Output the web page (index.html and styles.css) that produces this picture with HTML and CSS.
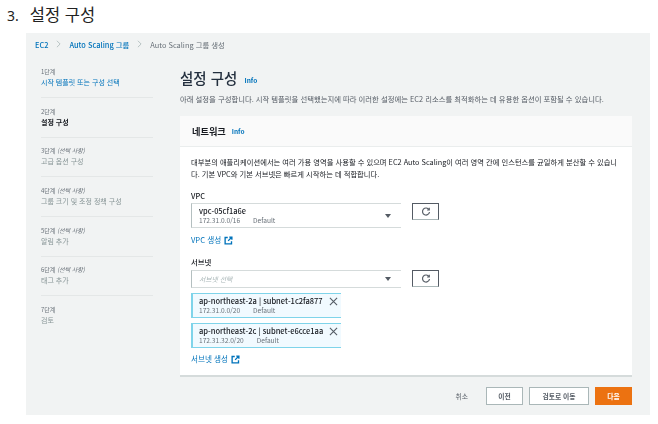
FILE: index.html
```html
<!DOCTYPE html>
<html lang="ko">
<head>
    <meta charset="UTF-8">
    <meta name="viewport" content="width=device-width, initial-scale=1.0">
    <title>설정 구성</title>
    <link rel="stylesheet" href="styles.css">
</head>
<body>
    <h2 class="doc-title"><span class="doc-num">3.</span>설정 구성</h2>

    <div class="console">
        <nav class="crumbs">
            <a>EC2</a>
            <svg class="crumb-sep" viewBox="0 0 6 10"><path d="M1 1l4 4-4 4"/></svg>
            <a>Auto Scaling 그룹</a>
            <svg class="crumb-sep" viewBox="0 0 6 10"><path d="M1 1l4 4-4 4"/></svg>
            <span>Auto Scaling 그룹 생성</span>
        </nav>

        <div class="wizard">
            <ol class="steps">
                <li class="step"><small>1단계</small><a>시작 템플릿 또는 구성 선택</a></li>
                <li class="step"><small>2단계</small><strong>설정 구성</strong></li>
                <li class="step"><small><span>3단계</span> <i>(선택 사항)</i></small><span class="todo">고급 옵션 구성</span></li>
                <li class="step"><small><span>4단계</span> <i>(선택 사항)</i></small><span class="todo">그룹 크기 및 조정 정책 구성</span></li>
                <li class="step"><small><span>5단계</span> <i>(선택 사항)</i></small><span class="todo">알림 추가</span></li>
                <li class="step"><small><span>6단계</span> <i>(선택 사항)</i></small><span class="todo">태그 추가</span></li>
                <li class="step last"><small>7단계</small><span class="todo">검토</span></li>
            </ol>

            <main class="content">
                <h1 class="page-title">설정 구성 <a class="info">Info</a></h1>
                <p class="page-desc">아래 설정을 구성합니다. 시작 템플릿을 선택했는지에 따라 이러한 설정에는 EC2 리소스를 최적화하는 데 유용한 옵션이 포함될 수 있습니다.</p>

                <section class="card">
                    <header class="card-head">
                        <h3>네트워크</h3>
                        <a class="info">Info</a>
                    </header>
                    <div class="card-body">
                        <p class="card-desc">대부분의 애플리케이션에서는 여러 가용 영역을 사용할 수 있으며 EC2 Auto Scaling이 여러 영역 간에 인스턴스를 균일하게 분산할 수 있습니다. 기본 VPC와 기본 서브넷은 빠르게 시작하는 데 적합합니다.</p>

                        <label class="field-label">VPC</label>
                        <div class="select-row vpc-row">
                            <div class="select tall">
                                <div>
                                    <div class="select-value">vpc-05cf1a6e</div>
                                    <div class="meta"><span class="cidr">172.31.0.0/16</span>Default</div>
                                </div>
                                <span class="caret"></span>
                            </div>
                            <button class="refresh"><svg viewBox="0 0 12 12"><path d="M9.6 3.2A4.2 4.2 0 1 0 10.2 6"/><path d="M9.9 1v2.6H7.3"/></svg></button>
                        </div>
                        <a class="ext-link">VPC 생성 <svg viewBox="0 0 12 12"><path d="M5 2H1.5v8.5H10V7"/><path d="M7 1.5h3.5V5M10.2 1.8 5.5 6.5"/></svg></a>

                        <label class="field-label subnet-label">서브넷</label>
                        <div class="select-row">
                            <div class="select">
                                <span class="placeholder">서브넷 선택</span>
                                <span class="caret"></span>
                            </div>
                            <button class="refresh"><svg viewBox="0 0 12 12"><path d="M9.6 3.2A4.2 4.2 0 1 0 10.2 6"/><path d="M9.9 1v2.6H7.3"/></svg></button>
                        </div>

                        <div class="token">
                            <div>
                                <div class="token-name">ap-northeast-2a | subnet-1c2fa877</div>
                                <div class="meta"><span class="cidr">172.31.0.0/20</span>Default</div>
                            </div>
                            <svg class="token-x" viewBox="0 0 10 10"><path d="M1 1l8 8M9 1l-8 8"/></svg>
                        </div>
                        <div class="token">
                            <div>
                                <div class="token-name">ap-northeast-2c | subnet-e6cce1aa</div>
                                <div class="meta"><span class="cidr">172.31.32.0/20</span>Default</div>
                            </div>
                            <svg class="token-x" viewBox="0 0 10 10"><path d="M1 1l8 8M9 1l-8 8"/></svg>
                        </div>
                        <a class="ext-link subnet-link">서브넷 생성 <svg viewBox="0 0 12 12"><path d="M5 2H1.5v8.5H10V7"/><path d="M7 1.5h3.5V5M10.2 1.8 5.5 6.5"/></svg></a>
                    </div>
                </section>

                <div class="actions">
                    <span class="cancel">취소</span>
                    <button class="btn prev">이전</button>
                    <button class="btn skip">검토로 이동</button>
                    <button class="btn primary">다음</button>
                </div>
            </main>
        </div>
    </div>
</body>
</html>
```

FILE: styles.css
```css
body {
    margin: 0;
    height: 424px;
    overflow: hidden;
    background: white;
    font-family: "Noto Sans CJK KR", "Noto Sans", sans-serif;
    color: #16191f;
}
.doc-title {
    margin: 0;
    padding: 4px 0 0 7px;
    height: 33px;
    box-sizing: border-box;
    font-size: 16.5px;
    line-height: 20px;
    font-weight: 400;
    color: #222;
}
.doc-num {
    font-family: "Noto Sans", sans-serif;
    font-size: 14px;
    margin-right: 11px;
}
.console {
    margin-left: 26px;
    width: 624px;
    height: 382px;
    padding-top: 5px;
    box-sizing: border-box;
    background: #f1f3f3;
    filter: blur(0.55px);
}
a {
    color: #0073bb;
}
.crumbs {
    display: flex;
    align-items: center;
    height: 12px;
    padding-left: 9px;
    font-size: 7.4px;
    font-weight: 500;
    color: #687078;
}
.crumbs span {
    font-weight: 400;
}
.crumb-sep {
    width: 5px;
    height: 8px;
    margin: 0 8px;
    fill: none;
    stroke: #aab7b8;
}
.wizard {
    display: flex;
    padding: 16px 18px 0 15px;
}
.steps {
    list-style: none;
    margin: 0;
    padding: 0;
    width: 112px;
    flex: none;
    font-size: 7px;
    line-height: 11px;
}
.step {
    height: 31px;
    margin-bottom: 7.7px;
    border-bottom: 1px solid #e4e7e7;
}
.step.last {
    border-bottom: none;
}
.step small {
    display: block;
    font-size: 6px;
    color: #687078;
}
.step small i {
    font-style: italic;
}
.step a, .step strong, .step .todo {
    display: block;
    white-space: nowrap;
}
.step strong {
    font-weight: 700;
}
.step .todo {
    color: #879596;
}
.content {
    margin-left: 27px;
    padding-top: 2px;
    width: 452px;
}
.page-title {
    margin: 0;
    font-size: 14.5px;
    line-height: 20px;
    font-weight: 500;
    color: #232f3e;
}
.info {
    font-size: 6.5px;
    font-weight: 700;
    margin-left: 3px;
    vertical-align: 1px;
}
.page-desc {
    margin: 3px 0 0;
    font-size: 7.35px;
    line-height: 11px;
    white-space: nowrap;
    color: #545b64;
}
.card {
    margin-top: 12px;
    height: 261px;
    background: white;
    border-bottom: 2px solid #d5dbdb;
    box-sizing: border-box;
}
.card-head {
    display: flex;
    align-items: center;
    gap: 3px;
    height: 31px;
    padding-left: 12px;
    background: #fafafa;
    border-bottom: 1px solid #eaeded;
    box-sizing: border-box;
}
.card-head h3 {
    margin: 0;
    font-size: 9.2px;
    font-weight: 700;
}
.card-body {
    padding: 9px 11px 0;
}
.card-desc {
    margin: 0;
    font-size: 7.3px;
    line-height: 12px;
    color: #16191f;
}
.field-label {
    display: block;
    margin-top: 10px;
    font-size: 7.4px;
    line-height: 11px;
    font-weight: 500;
}
.subnet-label {
    margin-top: 11px;
}
.select-row {
    display: flex;
    align-items: flex-start;
    gap: 11px;
    margin-top: 3px;
}
.vpc-row {
    margin-top: 2px;
}
.select {
    display: flex;
    align-items: center;
    justify-content: space-between;
    width: 210px;
    height: 18px;
    padding: 0 10px 0 7px;
    box-sizing: border-box;
    background: white;
    border: 1px solid #d5dbdb;
    border-right: none;
    border-left-color: #b4bfc0;
}
.select.tall {
    height: 25px;
}
.select-value {
    font-size: 7.4px;
    line-height: 10px;
    font-weight: 500;
}
.meta {
    font-size: 6.6px;
    line-height: 9px;
    color: #687078;
}
.cidr {
    margin-right: 13px;
}
.placeholder {
    font-size: 6.8px;
    font-style: italic;
    color: #aab7b8;
}
.caret {
    width: 0;
    height: 0;
    border-left: 3px solid transparent;
    border-right: 3px solid transparent;
    border-top: 4px solid #545b64;
}
.refresh {
    display: flex;
    align-items: center;
    justify-content: center;
    width: 27px;
    height: 17px;
    padding: 0;
    background: white;
    border: 1px solid #545b64;
    border-bottom-color: #aab7b8;
}
.refresh svg {
    width: 10px;
    height: 10px;
    fill: none;
    stroke: #545b64;
    stroke-width: 1.4;
}
.ext-link {
    display: flex;
    align-items: center;
    gap: 3px;
    margin-top: 7px;
    font-size: 7.6px;
    line-height: 10px;
}
.ext-link svg {
    width: 9px;
    height: 9px;
    fill: none;
    stroke: #0073bb;
    stroke-width: 1.8;
}
.token {
    display: flex;
    align-items: center;
    justify-content: space-between;
    width: 150px;
    height: 25px;
    margin-top: 5px;
    padding: 0 3px 0 6px;
    box-sizing: border-box;
    background: #f1faff;
    border: 1px solid #7fd4ea;
    border-left-width: 2px;
    border-right: none;
}
.token-name {
    font-size: 7.5px;
    line-height: 10px;
    font-weight: 500;
    white-space: nowrap;
}
.token-x {
    flex: none;
    width: 9px;
    height: 9px;
    margin-bottom: 8px;
    stroke: #545b64;
    stroke-width: 1.2;
}
.subnet-link {
    margin-top: 6px;
}
.actions {
    display: flex;
    align-items: center;
    justify-content: flex-end;
    gap: 6px;
    margin-top: 10px;
}
.cancel {
    font-size: 6.8px;
    margin-right: 12px;
    color: #545b64;
}
.btn {
    height: 18px;
    padding: 0;
    font-family: inherit;
    font-size: 6.8px;
    font-weight: 700;
    white-space: nowrap;
    color: #545b64;
    background: white;
    border: 1px solid #aab7b8;
}
.prev {
    width: 37px;
}
.skip {
    width: 60px;
}
.btn.primary {
    color: white;
    background: #ec7211;
    border-color: #ec7211;
    width: 37px;
}
```
